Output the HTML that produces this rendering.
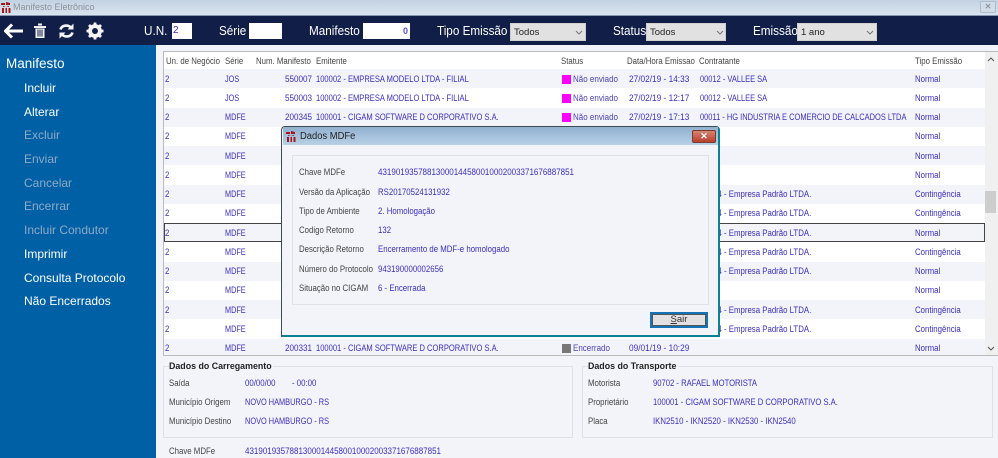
<!DOCTYPE html>
<html><head><meta charset="utf-8"><style>
html,body{margin:0;padding:0;width:998px;height:458px;overflow:hidden;background:#f3f4fa}
body{position:relative;font-family:"Liberation Sans",sans-serif;font-size:9px;color:#3a2fbf}
#r{position:absolute;left:0;top:0;width:998px;height:458px;filter:blur(.3px);overflow:hidden}
#r div,#r span,#r svg{position:absolute;white-space:nowrap}
.h{top:56px;color:#444;font-size:9px;line-height:11px;transform:scaleX(.87);transform-origin:left}
.row{left:164px;width:821px;height:19.25px;overflow:visible}
.s{background:#f3f4fa}.w{background:#fff}
.row span{top:4.500px;line-height:11px;transform-origin:left;transform:scaleX(.87)}
.u{left:1px}.se{left:61px;transform:scaleX(.81)!important}.n{right:673px;transform-origin:right!important;transform:scaleX(.9)!important}.e{left:152px;transform:scaleX(.84)!important}.q{left:398px;top:5.500px!important;width:9px;height:9px;background:#f0f;transform:none!important}.st{left:409px;color:#4d43b8;transform:scaleX(.89)!important}.d{left:465px;transform:scaleX(.92)!important}.c{left:536px}.cc{transform:scaleX(.83)!important}.t{left:751px}
.mi{left:24px;font-size:12px;line-height:14px;color:#fff}.dis{color:#8fa9c6}
.tl{color:#fff;font-size:13px;line-height:16px;top:23px;transform:scaleX(.9);transform-origin:left}
.in{background:#fff;height:16px;top:23px;color:#3a2fbf;font-size:10px;line-height:16px}
.sel{background:#e1e1e1;top:23px;height:18px;border:1px solid #cfcfcf;box-sizing:border-box;color:#222;font-size:9.500px;line-height:17px;padding-left:3px}
.l,.v{margin-top:.4px;line-height:11px;transform:scaleX(.87);transform-origin:left}
.l{color:#444}.v{color:#3a2fbf}.g{transform:scaleX(.89)}.k{transform:scaleX(.82)}.p{transform:scaleX(.85)}
.b{background:#f3f4fa;color:#222;font-weight:bold;font-size:9.500px;line-height:12px;top:361px;transform:scaleX(.93);transform-origin:left;padding-right:2px}
</style></head><body><div id="r">

<div style="left:0;top:0;width:998px;height:15px;background:linear-gradient(#c3d2e2,#d8e4ef)"></div>
<svg style="left:1px;top:2px" width="10" height="11" viewBox="0 0 10 11"><path d="M0 1h4v2H0zM5 0l4 1v2H5zM2 4l3 1 3-1v1H2zM1 6h2v5H1zM4.500 6h1.500v5H4.500zM7.500 6h2v5h-2z" fill="#a5161c"/></svg>
<span style="left:13px;top:2px;font-size:9px;line-height:11px;color:#8b9098">Manifesto Eletrônico</span>
<div style="left:980px;top:1px;width:16px;height:12px;border:1px solid #aebccb;box-sizing:border-box;border-radius:2px;background:#d2dde8;color:#8b98a5;font-size:8px;line-height:10px;text-align:center;font-weight:bold">✕</div>

<div style="left:0;top:15px;width:998px;height:1px;background:#8a98ae"></div>
<div style="left:0;top:16px;width:998px;height:29px;background:#101e48"></div>

<svg style="left:4px;top:23px" width="20" height="16" viewBox="0 0 20 16"><path d="M8 1.500L1.500 8 8 14.500M2.500 8H19" fill="none" stroke="#fff" stroke-width="3"/></svg>
<svg style="left:33px;top:23px" width="14" height="16" viewBox="0 0 14 16"><path d="M5 1.500h4M1 4h12" stroke="#f2f2f2" stroke-width="2" fill="none"/><path d="M2.500 5.500h9V15h-9z" fill="#f2f2f2"/><path d="M5 6.500v7M7 6.500v7M9 6.500v7" stroke="#101e48" stroke-width="1"/></svg>
<svg style="left:58px;top:23px" width="17" height="16" viewBox="0 0 17 16"><path d="M2.500 6.500C3.500 2.500 9.500 1 13 4.500M14.500 9.500C13.500 13.500 7.500 15 4 11.500" fill="none" stroke="#f4f4f4" stroke-width="2.600"/><path d="M15.500 .5v6h-6zM1.500 15.500v-6h6z" fill="#f4f4f4"/></svg>
<svg style="left:86px;top:22px" width="18" height="18" viewBox="0 0 18 18"><circle cx="9" cy="9" r="5.300" fill="none" stroke="#f4f4f4" stroke-width="3.200"/><path d="M9 .5v17M.5 9h17M3 3l12 12M15 3L3 15" stroke="#f4f4f4" stroke-width="2.800"/><circle cx="9" cy="9" r="3" fill="#101e48"/></svg>

<span class="tl" style="left:144px">U.N.</span><div class="in" style="left:172px;width:20px;padding-left:1px;box-sizing:border-box">2</div>
<span class="tl" style="left:219px">Série</span><div class="in" style="left:249px;width:33px"></div>
<span class="tl" style="left:309px">Manifesto</span><div class="in" style="left:363px;width:47px;text-align:right;padding-right:2px;box-sizing:border-box;font-weight:bold;color:#5a50c8;font-size:9px">0</div>
<span class="tl" style="left:437px">Tipo Emissão</span><div class="sel" style="left:510px;width:76px">Todos</div>
<span class="tl" style="left:613px">Status</span><div class="sel" style="left:646px;width:80px">Todos</div>
<span class="tl" style="left:753px">Emissão</span><div class="sel" style="left:797px;width:80px">1 ano</div>
<svg style="left:575px;top:30px" width="8" height="5"><path d="M1 1l3 3 3-3" stroke="#777" fill="none"/></svg>
<svg style="left:716px;top:30px" width="8" height="5"><path d="M1 1l3 3 3-3" stroke="#777" fill="none"/></svg>
<svg style="left:866px;top:30px" width="8" height="5"><path d="M1 1l3 3 3-3" stroke="#777" fill="none"/></svg>

<div style="left:0;top:45px;width:156px;height:413px;background:#0060a5"></div>
<span style="left:6px;top:55px;color:#fff;font-size:13.500px;line-height:17px">Manifesto</span>
<span class="mi" style="top:81px">Incluir</span>
<span class="mi" style="top:105px">Alterar</span>
<span class="mi dis" style="top:128px">Excluir</span>
<span class="mi dis" style="top:152px">Enviar</span>
<span class="mi dis" style="top:176px">Cancelar</span>
<span class="mi dis" style="top:199px">Encerrar</span>
<span class="mi dis" style="top:223px">Incluir Condutor</span>
<span class="mi" style="top:247px">Imprimir</span>
<span class="mi" style="top:271px">Consulta Protocolo</span>
<span class="mi" style="top:294px">Não Encerrados</span>

<div style="left:163px;top:51px;width:835px;height:305px;background:#fff;border-top:1px solid #bbb;border-left:1px solid #bbb;border-bottom:1px solid #bbb;box-sizing:border-box"></div>
<div style="left:985px;top:52px;width:13px;height:303px;background:#f0f0f0"></div>
<div style="left:985px;top:191px;width:11px;height:22px;background:#cdcdcd"></div>
<svg style="left:987px;top:57px" width="8" height="5"><path d="M1 4l3-3 3 3" stroke="#555" fill="none"/></svg>
<svg style="left:987px;top:346px" width="8" height="5"><path d="M1 1l3 3 3-3" stroke="#555" fill="none"/></svg>

<span class="h" style="left:166px">Un. de Negócio</span><span class="h" style="left:225px">Série</span><span class="h" style="left:256px">Num. Manifesto</span><span class="h" style="left:316px">Emitente</span><span class="h" style="left:561px">Status</span><span class="h" style="left:627px">Data/Hora Emissao</span><span class="h" style="left:699px">Contratante</span><span class="h" style="left:915px">Tipo Emissão</span>

<div class="row s" style="top:69px"><span class="u">2</span><span class="se">JOS</span><span class="n">550007</span><span class="e">100002 - EMPRESA MODELO LTDA - FILIAL</span><span class="q"></span><span class="st">Não enviado</span><span class="d">27/02/19 - 14:33</span><span class="c cc">00012 - VALLEE SA</span><span class="t">Normal</span></div>
<div class="row w" style="top:88.250px"><span class="u">2</span><span class="se">JOS</span><span class="n">550003</span><span class="e">100002 - EMPRESA MODELO LTDA - FILIAL</span><span class="q"></span><span class="st">Não enviado</span><span class="d">27/02/19 - 12:17</span><span class="c cc">00012 - VALLEE SA</span><span class="t">Normal</span></div>
<div class="row s" style="top:107.500px"><span class="u">2</span><span class="se">MDFE</span><span class="n">200345</span><span class="e">100001 - CIGAM SOFTWARE D CORPORATIVO S.A.</span><span class="q"></span><span class="st">Não enviado</span><span class="d">27/02/19 - 17:13</span><span class="c cc">00011 - HG INDUSTRIA E COMERCIO DE CALCADOS LTDA</span><span class="t">Normal</span></div>
<div class="row w" style="top:126.750px"><span class="u">2</span><span class="se">MDFE</span><span class="t">Normal</span></div>
<div class="row s" style="top:146px"><span class="u">2</span><span class="se">MDFE</span><span class="t">Normal</span></div>
<div class="row w" style="top:165.250px"><span class="u">2</span><span class="se">MDFE</span><span class="t">Normal</span></div>
<div class="row s" style="top:184.500px"><span class="u">2</span><span class="se">MDFE</span><span class="c">00004 - Empresa Padrão LTDA.</span><span class="t">Contingência</span></div>
<div class="row w" style="top:203.750px"><span class="u">2</span><span class="se">MDFE</span><span class="c">00004 - Empresa Padrão LTDA.</span><span class="t">Contingência</span></div>
<div class="row s" style="top:223px;outline:1px solid #444;outline-offset:-1px"><span class="u">2</span><span class="se">MDFE</span><span class="c">00004 - Empresa Padrão LTDA.</span><span class="t">Normal</span></div>
<div class="row w" style="top:242.250px"><span class="u">2</span><span class="se">MDFE</span><span class="c">00004 - Empresa Padrão LTDA.</span><span class="t">Contingência</span></div>
<div class="row s" style="top:261.500px"><span class="u">2</span><span class="se">MDFE</span><span class="c">00004 - Empresa Padrão LTDA.</span><span class="t">Normal</span></div>
<div class="row w" style="top:280.750px"><span class="u">2</span><span class="se">MDFE</span><span class="t">Normal</span></div>
<div class="row s" style="top:300px"><span class="u">2</span><span class="se">MDFE</span><span class="c">00004 - Empresa Padrão LTDA.</span><span class="t">Contingência</span></div>
<div class="row w" style="top:319.250px"><span class="u">2</span><span class="se">MDFE</span><span class="c">00004 - Empresa Padrão LTDA.</span><span class="t">Contingência</span></div>
<div class="row s" style="top:338.500px;height:16px"><span class="u">2</span><span class="se">MDFE</span><span class="n">200331</span><span class="e">100001 - CIGAM SOFTWARE D CORPORATIVO S.A.</span><span class="q" style="background:#777"></span><span class="st">Encerrado</span><span class="d">09/01/19 - 10:29</span><span class="t">Normal</span></div>

<div style="left:163px;top:366px;width:410px;height:72px;border:1px solid #dfe1e8;box-sizing:border-box"></div>
<span class="b" style="left:169px">Dados do Carregamento</span>
<span class="l" style="left:169px;top:378px">Saída</span><span class="v" style="left:245px;top:378px">00/00/00</span><span class="v" style="left:292px;top:378px">- 00:00</span>
<span class="l" style="left:169px;top:397px">Município Origem</span><span class="v k" style="left:245px;top:397px">NOVO HAMBURGO - RS</span>
<span class="l" style="left:169px;top:416px">Município Destino</span><span class="v k" style="left:245px;top:416px">NOVO HAMBURGO - RS</span>
<span class="l" style="left:169px;top:446px">Chave MDFe</span><span class="v g" style="left:245px;top:446px">43190193578813000144580010002003371676887851</span>

<div style="left:582px;top:366px;width:411px;height:72px;border:1px solid #dfe1e8;box-sizing:border-box"></div>
<span class="b" style="left:588px">Dados do Transporte</span>
<span class="l" style="left:588px;top:378px">Motorista</span><span class="v p" style="left:653px;top:378px">90702 - RAFAEL MOTORISTA</span>
<span class="l" style="left:588px;top:397px">Proprietário</span><span class="v p" style="left:653px;top:397px">100001 - CIGAM SOFTWARE D CORPORATIVO S.A.</span>
<span class="l" style="left:588px;top:416px">Placa</span><span class="v" style="left:653px;top:416px">IKN2510 - IKN2520 - IKN2530 - IKN2540</span>

<div style="left:281px;top:126px;width:439px;height:211px;background:#f3f4fa;border:1px solid #3b4a55;border-right:2px solid #0f7f92;border-bottom:2px solid #0f7f92;box-sizing:border-box;border-radius:4px 4px 0 0"></div>
<div style="left:283px;top:127px;width:435px;height:18px;background:linear-gradient(#92b1d0,#b7d0e6)"></div>
<svg style="left:286px;top:131px" width="10" height="11" viewBox="0 0 10 11"><path d="M0 1h4v2H0zM5 0l4 1v2H5zM2 4l3 1 3-1v1H2zM1 6h2v5H1zM4.500 6h1.500v5H4.500zM7.500 6h2v5h-2z" fill="#a5161c"/></svg>
<span style="left:300px;top:131px;color:#222;font-size:10px;line-height:12px;transform:scaleX(.94);transform-origin:left">Dados MDFe</span>
<div style="left:692px;top:130px;width:24px;height:13px;background:linear-gradient(#d98472,#b6402c);border:1px solid #7b3b30;box-sizing:border-box;border-radius:2px;color:#fff;font-size:9px;line-height:11px;text-align:center;font-weight:bold">✕</div>
<div style="left:292px;top:155px;width:417px;height:150px;border:1px solid #e0e1e8;box-sizing:border-box"></div>

<span class="l" style="left:299px;top:167px">Chave MDFe</span><span class="v g" style="left:378px;top:167px">43190193578813000144580010002003371676887851</span>
<span class="l" style="left:299px;top:187px">Versão da Aplicação</span><span class="v" style="left:378px;top:187px">RS20170524131932</span>
<span class="l" style="left:299px;top:206px">Tipo de Ambiente</span><span class="v" style="left:378px;top:206px">2. Homologação</span>
<span class="l" style="left:299px;top:225px">Codigo Retorno</span><span class="v" style="left:378px;top:225px">132</span>
<span class="l" style="left:299px;top:244px">Descrição Retorno</span><span class="v" style="left:378px;top:244px">Encerramento de MDF-e homologado</span>
<span class="l" style="left:299px;top:264px">Número do Protocolo</span><span class="v" style="left:378px;top:264px">943190000002656</span>
<span class="l" style="left:299px;top:283px">Situação no CIGAM</span><span class="v" style="left:378px;top:283px">6 - Encerrada</span>

<div style="left:650px;top:312px;width:58px;height:16px;background:#e1e1e1;border:2px solid #1573b5;outline:1px solid #555;outline-offset:-3px;box-sizing:border-box;color:#333;text-align:center;line-height:12px;font-size:9.500px"><u>S</u>air</div>
</div></body></html>
